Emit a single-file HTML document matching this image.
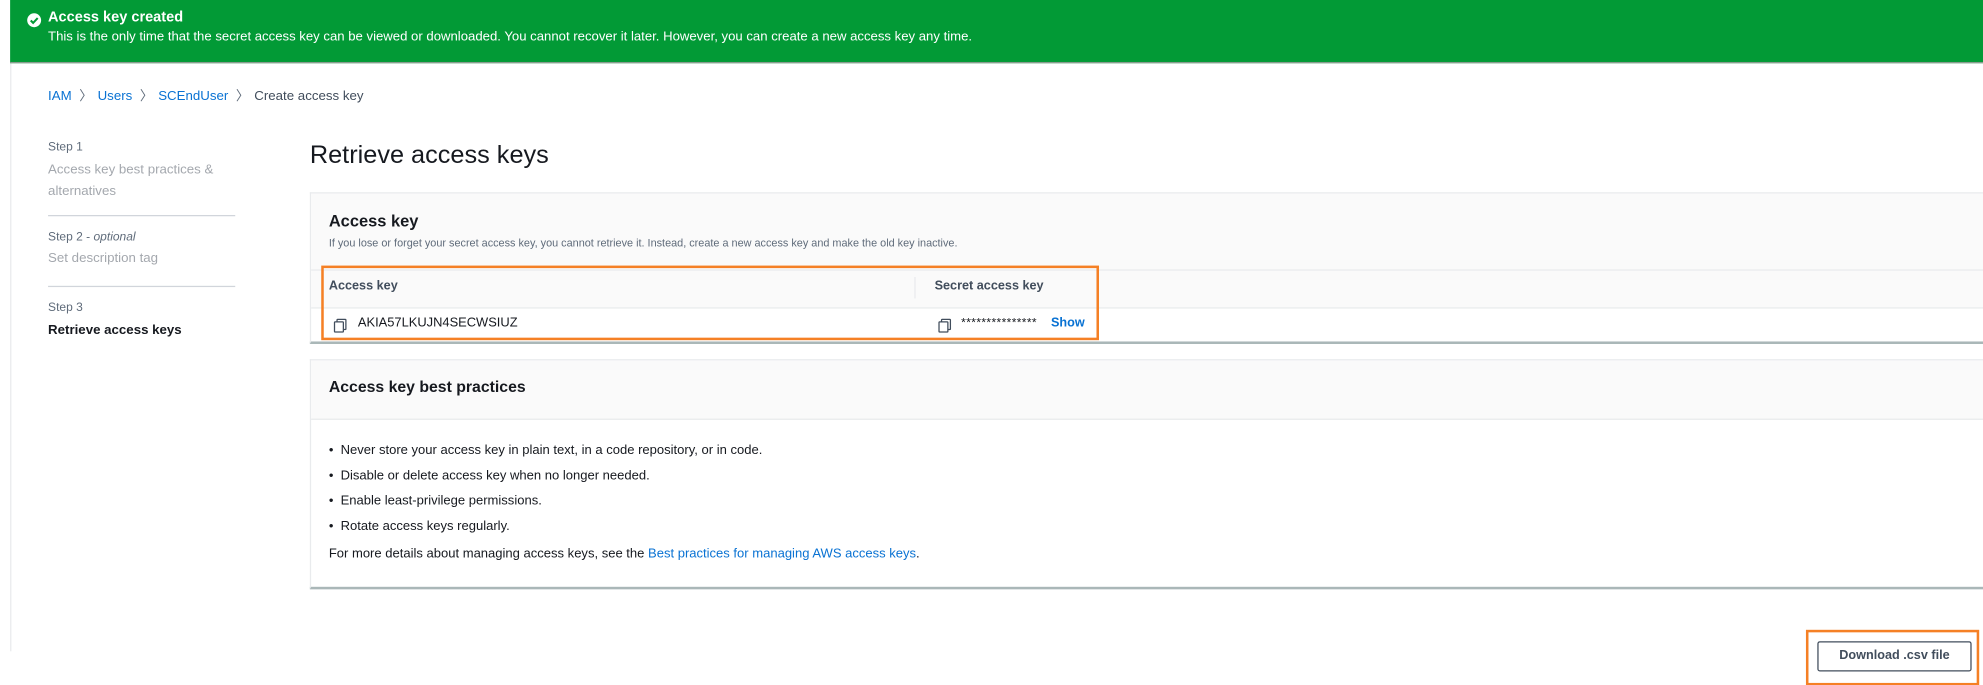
<!DOCTYPE html>
<html><head><meta charset="utf-8"><style>
html,body{margin:0;padding:0;width:1983px;height:651px;overflow:hidden;background:#fff}
#w{position:absolute;left:0;top:0;width:1568px;height:515px;transform:scale(1.26467);transform-origin:0 0;font-family:"Liberation Sans",sans-serif;color:#16191f}
.a{position:absolute;white-space:nowrap}
.link{color:#0972d3}
.step{font-size:9.5px;color:#5f6b7a}
.hr{position:absolute;height:1px;background:#d1d5db}
.card{position:absolute;left:245px;width:1330px;border:1px solid #e9ebed;border-bottom:2px solid #aab7b8;background:#fff}
.ic{position:absolute;width:6px;height:7px;border:1.3px solid #414d5c;border-radius:1px;background:#fff}
.sep{color:#5f6b7a;margin:0 4px 0 6px}
</style></head><body><div id="w">
<div class="a" style="left:8px;top:49px;width:1px;height:466px;background:#e9ebed"></div>
<div class="a" style="left:8px;top:0;width:1560px;height:49px;background:#029a36;border-bottom:1px solid #8a9b8f"></div>
<svg class="a" style="left:21px;top:10px" width="12" height="12" viewBox="0 0 12 12"><circle cx="6" cy="6" r="5.5" fill="#fff"/><path d="M3.3 6.2l1.9 1.9 3.6-3.8" stroke="#029a36" stroke-width="1.6" fill="none"/></svg>
<div class="a" style="left:38px;top:8px;font-size:11.5px;font-weight:bold;color:#fff">Access key created</div>
<div class="a" style="left:38px;top:24px;font-size:10.4px;color:#fff">This is the only time that the secret access key can be viewed or downloaded. You cannot recover it later. However, you can create a new access key any time.</div>

<div class="a" style="left:38px;top:68px;font-size:10.5px"><span class="link">IAM</span><span class="sep">〉</span><span class="link">Users</span><span class="sep">〉</span><span class="link">SCEndUser</span><span class="sep">〉</span><span style="color:#414d5c">Create access key</span></div>

<div class="a step" style="left:38px;top:111px">Step 1</div>
<div class="a" style="left:38px;top:126px;font-size:10.5px;line-height:17px;color:#a4a8ae">Access key best practices &amp;<br>alternatives</div>
<div class="hr" style="left:38px;top:170px;width:148px"></div>
<div class="a step" style="left:38px;top:182px">Step 2 - <i>optional</i></div>
<div class="a" style="left:38px;top:198px;font-size:10.5px;color:#a4a8ae">Set description tag</div>
<div class="hr" style="left:38px;top:226px;width:148px"></div>
<div class="a step" style="left:38px;top:238px">Step 3</div>
<div class="a" style="left:38px;top:255px;font-size:10.5px;font-weight:bold;color:#16191f">Retrieve access keys</div>

<div class="a" style="left:245px;top:112px;font-size:20px;color:#16191f">Retrieve access keys</div>

<div class="card" style="top:152px;height:117px">
 <div class="a" style="left:0;top:0;width:1330px;height:60px;background:#fafafa"></div>
 <div class="a" style="left:14px;top:14px;font-size:13px;font-weight:bold">Access key</div>
 <div class="a" style="left:14px;top:34px;font-size:8.6px;color:#5f6b7a">If you lose or forget your secret access key, you cannot retrieve it. Instead, create a new access key and make the old key inactive.</div>
 <div class="a" style="left:0;top:60px;width:1330px;height:29px;background:#fafafa;border-top:1px solid #e9ebed;border-bottom:1px solid #e9ebed"></div>
 <div class="a" style="left:14px;top:68px;font-size:10px;font-weight:bold;color:#414d5c">Access key</div>
 <div class="a" style="left:477px;top:66px;width:1px;height:17px;background:#e9ebed"></div>
 <div class="a" style="left:493px;top:68px;font-size:10px;font-weight:bold;color:#414d5c">Secret access key</div>
 <div class="ic" style="left:20px;top:99px"></div><div class="ic" style="left:18px;top:101px"></div>
 <div class="a" style="left:37px;top:97px;font-size:10.2px">AKIA57LKUJN4SECWSIUZ</div>
 <div class="ic" style="left:498px;top:99px"></div><div class="ic" style="left:496px;top:101px"></div>
 <div class="a" style="left:514px;top:97px;font-size:9.5px;letter-spacing:0.3px">***************</div>
 <div class="a" style="left:585px;top:97px;font-size:10px;font-weight:bold;color:#0972d3">Show</div>
</div>
<div class="a" style="left:254px;top:210px;width:611px;height:55px;border:2px solid #f58025"></div>

<div class="card" style="top:284px;height:179px">
 <div class="a" style="left:0;top:0;width:1330px;height:46px;background:#fafafa;border-bottom:1px solid #e9ebed"></div>
 <div class="a" style="left:14px;top:14px;font-size:12.5px;font-weight:bold">Access key best practices</div>
 <div class="a" style="left:14px;top:62px;font-size:10.3px;line-height:20px;color:#16191f">
  • &nbsp;Never store your access key in plain text, in a code repository, or in code.<br>
  • &nbsp;Disable or delete access key when no longer needed.<br>
  • &nbsp;Enable least-privilege permissions.<br>
  • &nbsp;Rotate access keys regularly.</div>
 <div class="a" style="left:14px;top:148px;font-size:10.3px">For more details about managing access keys, see the <span class="link">Best practices for managing AWS access keys</span>.</div>
</div>

<div class="a" style="left:1437px;top:507px;width:120px;height:22px;border:1px solid #414d5c;border-radius:2px;font-size:10px;font-weight:bold;line-height:22px;text-align:center;color:#414d5c">Download .csv file</div>
<div class="a" style="left:1428px;top:498px;width:133px;height:40px;border:2px solid #f58025"></div>
</div></body></html>
